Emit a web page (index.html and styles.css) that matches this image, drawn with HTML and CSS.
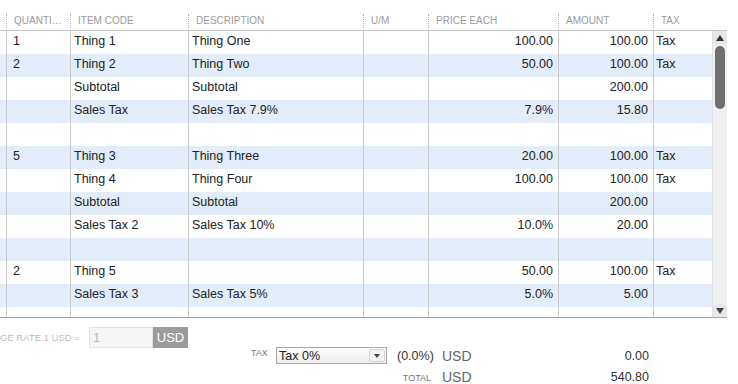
FILE: index.html
```html
<!DOCTYPE html>
<html lang="en">
<head>
	<meta charset="UTF-8">
	<title>Invoice lines</title>
<link rel="stylesheet" href="styles.css">
</head>
<body>
	<div class="grid">
		<div class="head">
			<span class="stub"></span>
			<span>QUANTI…</span>
			<span>ITEM CODE</span>
			<span>DESCRIPTION</span>
			<span>U/M</span>
			<span>PRICE EACH</span>
			<span>AMOUNT</span>
			<span>TAX</span>
			<span class="stub"></span>
		</div>
		<div class="body">
			<div class="rows">
				<div class="row"><span></span><span class="qty">1</span><span>Thing 1</span><span>Thing One</span><span></span><span class="num">100.00</span><span class="num">100.00</span><span class="tax">Tax</span></div>
				<div class="row alt"><span></span><span class="qty">2</span><span>Thing 2</span><span>Thing Two</span><span></span><span class="num">50.00</span><span class="num">100.00</span><span class="tax">Tax</span></div>
				<div class="row"><span></span><span class="qty"></span><span>Subtotal</span><span>Subtotal</span><span></span><span class="num"></span><span class="num">200.00</span><span class="tax"></span></div>
				<div class="row alt"><span></span><span class="qty"></span><span>Sales Tax</span><span>Sales Tax 7.9%</span><span></span><span class="num">7.9%</span><span class="num">15.80</span><span class="tax"></span></div>
				<div class="row"><span></span><span class="qty"></span><span></span><span></span><span></span><span class="num"></span><span class="num"></span><span class="tax"></span></div>
				<div class="row alt"><span></span><span class="qty">5</span><span>Thing 3</span><span>Thing Three</span><span></span><span class="num">20.00</span><span class="num">100.00</span><span class="tax">Tax</span></div>
				<div class="row"><span></span><span class="qty"></span><span>Thing 4</span><span>Thing Four</span><span></span><span class="num">100.00</span><span class="num">100.00</span><span class="tax">Tax</span></div>
				<div class="row alt"><span></span><span class="qty"></span><span>Subtotal</span><span>Subtotal</span><span></span><span class="num"></span><span class="num">200.00</span><span class="tax"></span></div>
				<div class="row"><span></span><span class="qty"></span><span>Sales Tax 2</span><span>Sales Tax 10%</span><span></span><span class="num">10.0%</span><span class="num">20.00</span><span class="tax"></span></div>
				<div class="row alt"><span></span><span class="qty"></span><span></span><span></span><span></span><span class="num"></span><span class="num"></span><span class="tax"></span></div>
				<div class="row"><span></span><span class="qty">2</span><span>Thing 5</span><span></span><span></span><span class="num">50.00</span><span class="num">100.00</span><span class="tax">Tax</span></div>
				<div class="row alt"><span></span><span class="qty"></span><span>Sales Tax 3</span><span>Sales Tax 5%</span><span></span><span class="num">5.0%</span><span class="num">5.00</span><span class="tax"></span></div>
				<div class="row"><span></span><span class="qty"></span><span></span><span></span><span></span><span class="num"></span><span class="num"></span><span class="tax"></span></div>
			</div>
			<div class="scroll">
				<div class="arrow up"></div>
				<div class="thumb"></div>
				<div class="track"></div>
				<div class="arrow down"></div>
			</div>
		</div>
	</div>

	<div class="foot">
		<div class="rate">
			<div class="lbl">GE RATE 1 USD =</div>
			<div class="box">1</div>
			<div class="cur">USD</div>
		</div>
		<div class="totals">
			<div class="trow">
				<div class="taxpick">
					<span class="small">TAX</span>
					<div class="select"><span>Tax 0%</span><i></i></div>
					<span class="pct">(0.0%)</span>
				</div>
				<span class="usd">USD</span>
				<span class="amt">0.00</span>
			</div>
			<div class="trow">
				<span class="small total">TOTAL</span>
				<span class="usd">USD</span>
				<span class="amt">540.80</span>
			</div>
		</div>
	</div>
</body>
</html>
```

FILE: styles.css
```css
*{box-sizing: border-box;}
body{
	margin: 0;
	font-family: "Liberation Sans", Arial, sans-serif;
	color: #222;
	background: #fff;
}
.grid{
	width: 727px;
}
.head{
	display: grid;
	grid-template-columns: 6px 64px 118px 175px 65px 130px 95px 59px 15px;
	align-items: center;
	margin-top: 11px;
	height: 20px;
	border-bottom: 1px solid #c6c6c6;
}
.head span{
	font-size: 10px;
	color: #9c9c9c;
	line-height: 14px;
	padding-left: 7px;
	border-left: 1px dotted #b4b4b4;
	white-space: nowrap;
	overflow: hidden;
}
.head .stub{
	border-left: 0;
	height: 14px;
}
.body{
	display: flex;
	height: 287px;
	border-bottom: 1px solid #a6a6a6;
}
.rows{
	width: 712px;
	overflow: hidden;
}
.row{
	display: grid;
	grid-template-columns: 6px 64px 118px 175px 65px 130px 95px 59px;
	height: 23px;
	line-height: 21px;
	font-size: 12.5px;
}
.row.alt{
	background: #e3ecf9;
}
.row span{
	border-left: 1px solid #c9c9c9;
	padding: 0 3px;
	white-space: nowrap;
	overflow: hidden;
}
.row span:first-child{
	border-left: 0;
}
.row .qty{
	padding-left: 6px;
}
.row .num{
	text-align: right;
	padding-right: 5px;
}
.row .tax{
	padding-left: 2px;
}
.scroll{
	width: 15px;
	display: flex;
	flex-direction: column;
	background: #f0f0f0;
	border-left: 1px solid #e2e2e2;
}
.arrow{
	height: 13px;
	display: flex;
	align-items: center;
	justify-content: center;
	background: #e8e8e8;
}
.arrow.up::before{
	content: "";
	border-left: 4px solid transparent;
	border-right: 4px solid transparent;
	border-bottom: 6px solid #333;
}
.arrow.down::before{
	content: "";
	border-left: 4px solid transparent;
	border-right: 4px solid transparent;
	border-top: 6px solid #444;
}
.thumb{
	height: 63px;
	margin: 2px 2px 0 2px;
	background: #6f6f6f;
	border-radius: 5px;
}
.track{
	flex: 1;
}
.foot{
	display: flex;
}
.rate{
	display: flex;
	align-items: center;
	margin-top: 9px;
	height: 21px;
}
.rate .lbl{
	width: 78px;
	text-align: right;
	white-space: nowrap;
	font-size: 9.5px;
	color: #bdbdbd;
	margin-right: 11px;
}
.rate .box{
	width: 64px;
	height: 21px;
	line-height: 19px;
	padding-left: 3px;
	background: #f6f6f6;
	border: 1px solid #e3e3e3;
	color: #bbb;
	font-size: 13px;
}
.rate .cur{
	width: 35px;
	height: 21px;
	line-height: 21px;
	text-align: center;
	background: #9c9c9c;
	color: #fff;
	font-size: 13px;
}
.totals{
	margin-left: 63px;
	margin-top: 27px;
}
.trow{
	display: grid;
	grid-template-columns: 191px 60px 147px;
	align-items: center;
	height: 21px;
}
.taxpick{
	display: flex;
	align-items: center;
}
.small{
	font-size: 9px;
	color: #777;
}
.taxpick .small{
	width: 25px;
	margin-top: -5px;
}
.small.total{
	text-align: right;
	padding-right: 11px;
	margin-top: 2px;
}
.select{
	width: 111px;
	height: 17px;
	display: flex;
	align-items: center;
	justify-content: space-between;
	border: 1px solid #a9a9a9;
	background: linear-gradient(#fdfdfd, #ececec);
	font-size: 12.5px;
	padding-left: 2px;
}
.select i{
	width: 16px;
	height: 13px;
	margin-right: 1px;
	display: flex;
	align-items: center;
	justify-content: center;
	border: 1px solid #d4d4d4;
	border-radius: 2px;
	background: #f4f4f4;
}
.select i::before{
	content: "";
	border-left: 3px solid transparent;
	border-right: 3px solid transparent;
	border-top: 4px solid #444;
}
.pct{
	margin-left: 10px;
	font-size: 12.5px;
	color: #333;
}
.usd{
	font-size: 14px;
	color: #666;
}
.amt{
	text-align: right;
	font-size: 12.5px;
	color: #333;
}
```
